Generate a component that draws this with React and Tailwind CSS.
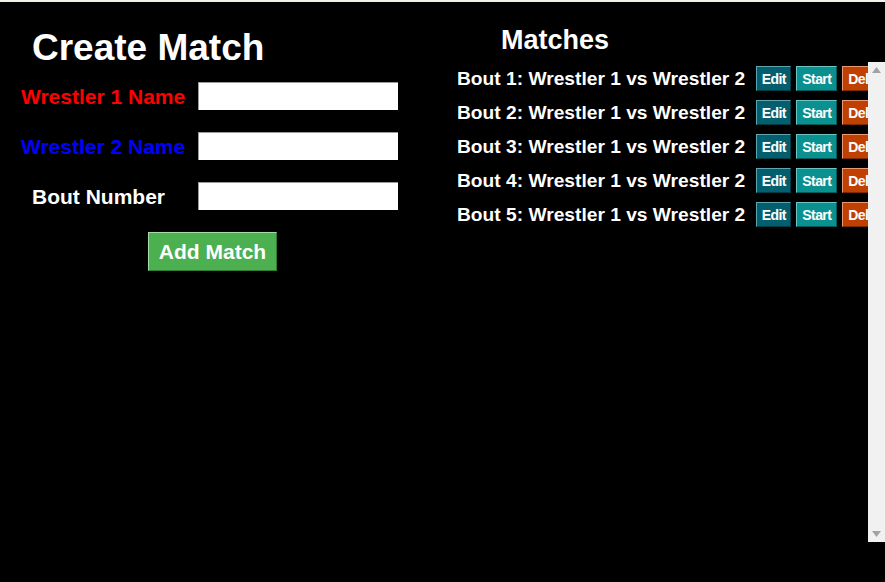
export default function App() {
  const bouts = [1, 2, 3, 4, 5];
  const btn = "shrink-0 h-[25px] border text-white text-[14px] tracking-[-0.6px] font-bold leading-none";
  return (
    <div className="w-[885px] h-[582px] bg-black border-t-2 border-[#eef3e6] font-['Liberation_Sans',Arial,sans-serif] font-bold text-white flex overflow-hidden">
      <div className="w-[447px] shrink-0 flex flex-col">
        <h1 className="mt-[27px] ml-[32px] text-[37px] leading-[37px] font-bold">Create Match</h1>
        <div className="mt-[16px] flex flex-col gap-[22px]">
          <div className="flex h-[28px]">
            <label className="w-[198px] pl-[21px] text-[21px] leading-[30px] text-[#ff0000]">Wrestler 1 Name</label>
            <input className="w-[200px] h-[28px] bg-white border-t border-l border-[#9a9a9a] outline-none" />
          </div>
          <div className="flex h-[28px]">
            <label className="w-[198px] pl-[21px] text-[21px] leading-[30px] text-[#0000ff]">Wrestler 2 Name</label>
            <input className="w-[200px] h-[28px] bg-white border-t border-l border-[#9a9a9a] outline-none" />
          </div>
          <div className="flex h-[28px]">
            <label className="w-[198px] pl-[32px] text-[21px] leading-[30px] text-white">Bout Number</label>
            <input className="w-[200px] h-[28px] bg-white border-t border-l border-[#9a9a9a] outline-none" />
          </div>
          <div className="flex">
            <button className="ml-[148px] w-[129px] h-[39px] bg-[#4caf50] border border-t-[#a5dba7] border-l-[#a5dba7] border-r-[#2e7d32] border-b-[#2e7d32] text-white text-[21px] font-bold leading-none">Add Match</button>
          </div>
        </div>
      </div>
      <div className="flex-1 min-w-0 flex flex-col">
        <h2 className="mt-[25px] ml-[54px] text-[27px] leading-[27px] font-bold h-[35px]">Matches</h2>
        <div className="h-[480px] flex">
          <div className="flex-1 min-w-0 overflow-hidden pt-[4px] pl-[10px] flex flex-col gap-[9px]">
            {bouts.map((n) => (
              <div key={n} className="flex items-center h-[25px] whitespace-nowrap shrink-0">
                <span className="text-[19.2px] leading-[25px] shrink-0">Bout {n}: Wrestler 1 vs Wrestler 2</span>
                <button className={`${btn} ml-[11px] w-[35px] bg-[#035f6e] border-t-[#5fa4ae] border-l-[#5fa4ae] border-r-[#013c45] border-b-[#013c45]`}>Edit</button>
                <button className={`${btn} ml-[5px] w-[41px] bg-[#0b9090] border-t-[#6cc4c4] border-l-[#6cc4c4] border-r-[#055858] border-b-[#055858]`}>Start</button>
                <button className={`${btn} ml-[5px] w-[48px] bg-[#bf4000] border-t-[#e89a72] border-l-[#e89a72] border-r-[#7a2800] border-b-[#7a2800] text-left pl-[5px]`}>Delete</button>
              </div>
            ))}
          </div>
          <div className="w-[17px] shrink-0 bg-[#f1f1f1] flex flex-col justify-between items-center py-[5px]">
            <svg width="9" height="6" viewBox="0 0 9 6"><polygon points="4.5,0 9,6 0,6" fill="#a3a3a3" /></svg>
            <svg width="9" height="6" viewBox="0 0 9 6"><polygon points="0,0 9,0 4.5,6" fill="#a3a3a3" /></svg>
          </div>
        </div>
      </div>
    </div>
  );
}
